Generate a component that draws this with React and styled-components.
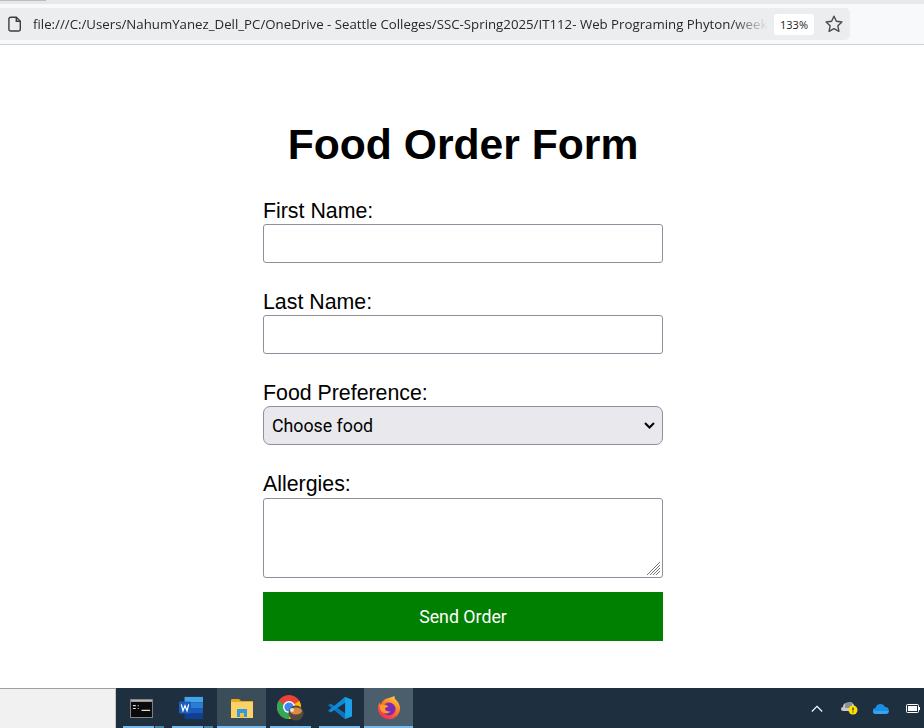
import React from 'react';
import styled, { createGlobalStyle } from 'styled-components';

const Global = createGlobalStyle`
  html, body { margin: 0; padding: 0; background: #fff; }
  body { font-family: "Liberation Sans", Arial, sans-serif; overflow: hidden; }
  * { box-sizing: border-box; }
`;
const Screen = styled.div`
  width: 924px; height: 728px; display: flex; flex-direction: column; overflow: hidden; background: #fff;
`;
const TabStrip = styled.div`
  height: 4px; background: #e8e8ea; display: flex; flex: none;
`;
const TabEdge = styled.div`
  width: 46px; height: 1px; background: #bdbdbd;
`;
const Toolbar = styled.div`
  height: 41px; flex: none; background: #f8f9fb; border-bottom: 1px solid #cfcfd1; padding-top: 4px;
`;
const AddressBar = styled.div`
  width: 850px; height: 32px; background: #ecedef; border-radius: 0 5px 5px 0; display: flex; align-items: center;
`;
const PageIcon = styled.svg`
  width: 14px; height: 16px; margin-left: 8px; flex: none;
`;
const Url = styled.div`
  width: 735px; margin-left: 11px; font: 13.25px "Open Sans", sans-serif; color: #26282b; white-space: nowrap; overflow: hidden;
  -webkit-mask-image: linear-gradient(to right, #000 95%, transparent 100%);
  mask-image: linear-gradient(to right, #000 95%, transparent 100%);
`;
const Zoom = styled.div`
  width: 40px; height: 21px; margin-left: 6px; background: #fff; border-radius: 3px; display: flex; align-items: center; justify-content: center;
  font: 11px "Open Sans", sans-serif; color: #222;
`;
const StarIcon = styled.svg`
  width: 20px; height: 20px; margin-left: 10px; flex: none;
`;
const Page = styled.main`
  flex: 1; display: flex; flex-direction: column; align-items: center; padding: 0 0 0 2px; min-height: 0;
`;
const Title = styled.h1`
  margin: 75px 0 31px; font-size: 42.67px; line-height: 49px; font-weight: 700; color: #000; text-align: center;
`;
const Form = styled.form`
  width: 400px; display: flex; flex-direction: column;
`;
const Field = styled.div`
  display: flex; flex-direction: column; margin-bottom: ${p => p.$gap}px;
`;
const Label = styled.label`
  font-size: 21.33px; line-height: 22px; color: #000; height: ${p => p.$h || 24}px;
`;
const TextInput = styled.input`
  width: 400px; height: 39px; border: 1px solid #8f8f9d; border-radius: 3px; background: #fff; padding: 0 8px; outline: none;
`;
const SelectBox = styled.div`
  position: relative; height: 39px;
`;
const Select = styled.select`
  appearance: none; width: 400px; height: 39px; border: 1px solid #8f8f9d; border-radius: 7px; background: #e9e8ed; color: #000;
  padding: 0 8px; font: 17.78px Roboto, sans-serif; outline: none;
`;
const Chevron = styled.svg`
  position: absolute; right: 8px; top: 15px; width: 11px; height: 9px; pointer-events: none;
`;
const TextAreaBox = styled.div`
  position: relative; height: 80px;
`;
const TextArea = styled.textarea`
  display: block; width: 400px; height: 80px; border: 1px solid #8f8f9d; border-radius: 3px; background: #fff; outline: none; resize: none;
`;
const Grip = styled.svg`
  position: absolute; right: 2px; bottom: 2px; width: 15px; height: 15px; pointer-events: none;
`;
const Send = styled.button`
  width: 400px; height: 49px; border: 0; background: #008000; color: #fff; font: 17.78px Roboto, sans-serif;
`;
const Taskbar = styled.footer`
  height: 40px; flex: none; display: flex; align-items: stretch; background: #1e3040;
`;
const Search = styled.div`
  width: 116px; background: #f1f1f1; border-top: 1px solid #a0a0a0; border-right: 1px solid #c8c8c8;
`;
const Apps = styled.div`
  display: flex; flex: 1; padding-left: 3px;
`;
const AppSlot = styled.div`
  width: 49px; display: flex; align-items: center; justify-content: center; position: relative;
  background: ${p => p.$active ? (p.$bright ? '#4a5f6b' : '#3a4d58') : 'transparent'};
  &::after {
    content: ""; position: absolute; bottom: 0; height: 2px;
    background: ${p => p.$stacked ? 'linear-gradient(to right, #76b9ed 76%, #1e3040 76% 78%, #4a86a8 78%)' : '#76b9ed'};
    left: ${p => p.$active ? 0 : 4}px; right: ${p => p.$active ? 0 : 4}px;
  }
`;
const Tray = styled.div`
  display: flex; align-items: center; padding-right: 4px;
`;
const TrayIcon = styled.svg`
  display: block; margin-left: ${p => p.$ml}px;
`;

export default function App() {
  return (
    <Screen>
      <Global />
      <TabStrip><TabEdge /></TabStrip>
      <Toolbar>
        <AddressBar>
          <PageIcon viewBox="0 0 14 16" fill="none" stroke="#3c3c3e" strokeWidth="1.4">
            <path d="M2.7 1.2h5.6l4 4v8a1.8 1.8 0 0 1-1.8 1.8H2.7A1.8 1.8 0 0 1 .9 13.200V3A1.800 1.800 0 0 1 2.700 1.200Z" />
            <path d="M8.300 1.200v4h4" />
          </PageIcon>
          <Url>file:///C:/Users/NahumYanez_Dell_PC/OneDrive - Seattle Colleges/SSC-Spring2025/IT112- Web Programing Phyton/week</Url>
          <Zoom>133%</Zoom>
          <StarIcon viewBox="0 0 20 20" fill="none" stroke="#4a4a4c" strokeWidth="1.4" strokeLinejoin="round">
            <path d="M10 2.200l2.400 5.100 5.500.7-4 3.800 1 5.500-4.900-2.700-4.900 2.700 1-5.500-4-3.800 5.500-.7Z" />
          </StarIcon>
        </AddressBar>
      </Toolbar>
      <Page>
        <Title>Food Order Form</Title>
        <Form>
          <Field $gap={28}>
            <Label>First Name:</Label>
            <TextInput />
          </Field>
          <Field $gap={28}>
            <Label>Last Name:</Label>
            <TextInput />
          </Field>
          <Field $gap={28}>
            <Label>Food Preference:</Label>
            <SelectBox>
              <Select defaultValue=""><option value="">Choose food</option></Select>
              <Chevron viewBox="0 0 11 9" fill="none" stroke="#000" strokeWidth="2"><path d="M1 2l4.500 4.500L10 2" /></Chevron>
            </SelectBox>
          </Field>
          <Field $gap={14}>
            <Label $h={25}>Allergies:</Label>
            <TextAreaBox>
              <TextArea />
              <Grip viewBox="0 0 15 15" stroke="#777" strokeWidth="1">
                <path d="M1 14L14 1M4 14L14 4M7 14L14 7M10 14L14 10" />
              </Grip>
            </TextAreaBox>
          </Field>
          <Send type="button">Send Order</Send>
        </Form>
      </Page>
      <Taskbar>
        <Search />
        <Apps>
          <AppSlot $stacked>
            <svg width="23" height="19" viewBox="0 0 24 20" style={{ marginRight: 4 }}>
              <rect x=".5" y=".5" width="23" height="19" fill="#0a0a0a" stroke="#8a8a8a" />
              <rect x="1" y="1" width="22" height="2" fill="#b5b5b5" />
              <path d="M3 7h3M3 10h3M8 7h1M8 10h1M12 12h9" stroke="#ddd" strokeWidth="1.300" />
            </svg>
          </AppSlot>
          <AppSlot $stacked>
            <svg width="24" height="24" viewBox="0 0 26 24" style={{ marginRight: 4 }}>
              <rect x="6" y="0" width="20" height="6" fill="#41a5ee" />
              <rect x="6" y="6" width="20" height="6" fill="#2b7cd3" />
              <rect x="6" y="12" width="20" height="6" fill="#185abd" />
              <rect x="6" y="18" width="20" height="6" fill="#103f91" />
              <rect x="0" y="5" width="13" height="13" rx="1" fill="#1a5dc0" />
              <path d="M2.500 8l1.800 7 2.200-5.500 2.200 5.500 1.800-7" fill="none" stroke="#fff" strokeWidth="1.300" />
            </svg>
          </AppSlot>
          <AppSlot $active>
            <svg width="22" height="20" viewBox="0 0 22 20">
              <path d="M0 2a1 1 0 0 1 1-1h7l2 2h12v3H0Z" fill="#e8a91f" />
              <rect x="0" y="4" width="22" height="16" fill="#fcd267" />
              <path d="M6 19v-8h10v8h-3v-4h-4v4Z" fill="#2d9be5" />
              <rect x="9" y="15" width="4" height="5" fill="#f5c042" />
            </svg>
          </AppSlot>
          <AppSlot>
            <svg width="28" height="26" viewBox="0 0 28 26">
              <circle cx="12" cy="12" r="12" fill="#ea4335" />
              <path d="M12 12L22.400 6A12 12 0 0 1 12 24Z" fill="#fbbc05" />
              <path d="M12 12L12 24A12 12 0 0 1 1.600 6Z" fill="#34a853" />
              <circle cx="12" cy="12" r="6" fill="#fff" />
              <circle cx="12" cy="12" r="4.600" fill="#4285f4" />
              <circle cx="19" cy="18" r="7.500" fill="#55493f" />
              <ellipse cx="19" cy="16" rx="6" ry="3.500" fill="#d98a45" />
              <circle cx="15" cy="15" r="2" fill="#e8e2d8" />
            </svg>
          </AppSlot>
          <AppSlot>
            <svg width="24" height="24" viewBox="0 0 26 26">
              <path d="M18.500 1L26 4v18l-7.500 3L7 14Z" fill="#0e7fc9" />
              <path d="M18.500 1L26 4v18l-7.500 3Z" fill="#1ba0ea" />
              <path d="M18.500 7v12L10 13Z" fill="#1e3040" />
              <path d="M3 8l15.500 11v6L0 10Z" fill="#0f74b8" />
              <path d="M3 18l15.500-11V1L0 16Z" fill="#0d8bd8" />
            </svg>
          </AppSlot>
          <AppSlot $active $bright>
            <svg width="24" height="24" viewBox="0 0 24 24">
              <defs>
                <linearGradient id="ff" x1="0.800" y1="0" x2="0.200" y2="1">
                  <stop offset="0" stopColor="#ffd43a" />
                  <stop offset=".45" stopColor="#ff7a24" />
                  <stop offset="1" stopColor="#f0245f" />
                </linearGradient>
              </defs>
              <path d="M12 2c3-1 5-2 5.500-2 0 1 0 2 .5 3 3 2.500 5 5.500 5 9.500A11 11 0 0 1 1 12c0-2 .5-4 1.500-5.500.5 1 1 1.500 1.500 2C5 5 8 2.500 12 2Z" fill="url(#ff)" />
              <circle cx="12" cy="13" r="6.500" fill="#7a2bb8" />
              <path d="M2.500 9c3-1 7-1 9 1.500-1.500.5-3.500 1-3.500 2.500s3 3 5.500 2.500c-2 2.500-6 2.500-8.500.5C3.500 14.500 2.500 12 2.500 9Z" fill="#ff9a2a" />
            </svg>
          </AppSlot>
        </Apps>
        <Tray>
          <TrayIcon $ml={0} width="12" height="7" viewBox="0 0 14 8" fill="none" stroke="#fff" strokeWidth="1.300"><path d="M1 7.500L7 1.500l6 6" /></TrayIcon>
          <TrayIcon $ml={18} width="17" height="14" viewBox="0 0 17 14">
            <path d="M2 10a2 2 0 0 1 0-4 4 4 0 0 1 4-4h4a3 3 0 0 1 3 4v4Z" fill="#c8c8c8" />
            <path d="M4 4a4 4 0 0 1 4-3h3v6H4Z" fill="#8f8f8f" />
            <circle cx="12" cy="9" r="4.500" fill="#ffe100" />
            <path d="M12 6.500v3M12 10.500v1" stroke="#1e3040" strokeWidth="1.200" />
          </TrayIcon>
          <TrayIcon $ml={15} width="16" height="11" viewBox="0 0 16 11">
            <path d="M3 11a3 3 0 0 1-.5-6A5 5 0 0 1 12 4a3.500 3.500 0 0 1 .5 7Z" fill="#1b8ee0" />
            <path d="M3 11a3 3 0 0 1-3-3h16a3.500 3.500 0 0 1-3.500 3Z" fill="#36a4ee" />
          </TrayIcon>
          <TrayIcon $ml={17} width="14" height="9" viewBox="0 0 14 9">
            <rect x=".5" y=".5" width="12" height="8" rx="1" fill="none" stroke="#fff" />
            <rect x="2" y="2" width="9" height="5" fill="#fff" />
            <rect x="13" y="3" width="1" height="3" fill="#fff" />
          </TrayIcon>
        </Tray>
      </Taskbar>
    </Screen>
  );
}
